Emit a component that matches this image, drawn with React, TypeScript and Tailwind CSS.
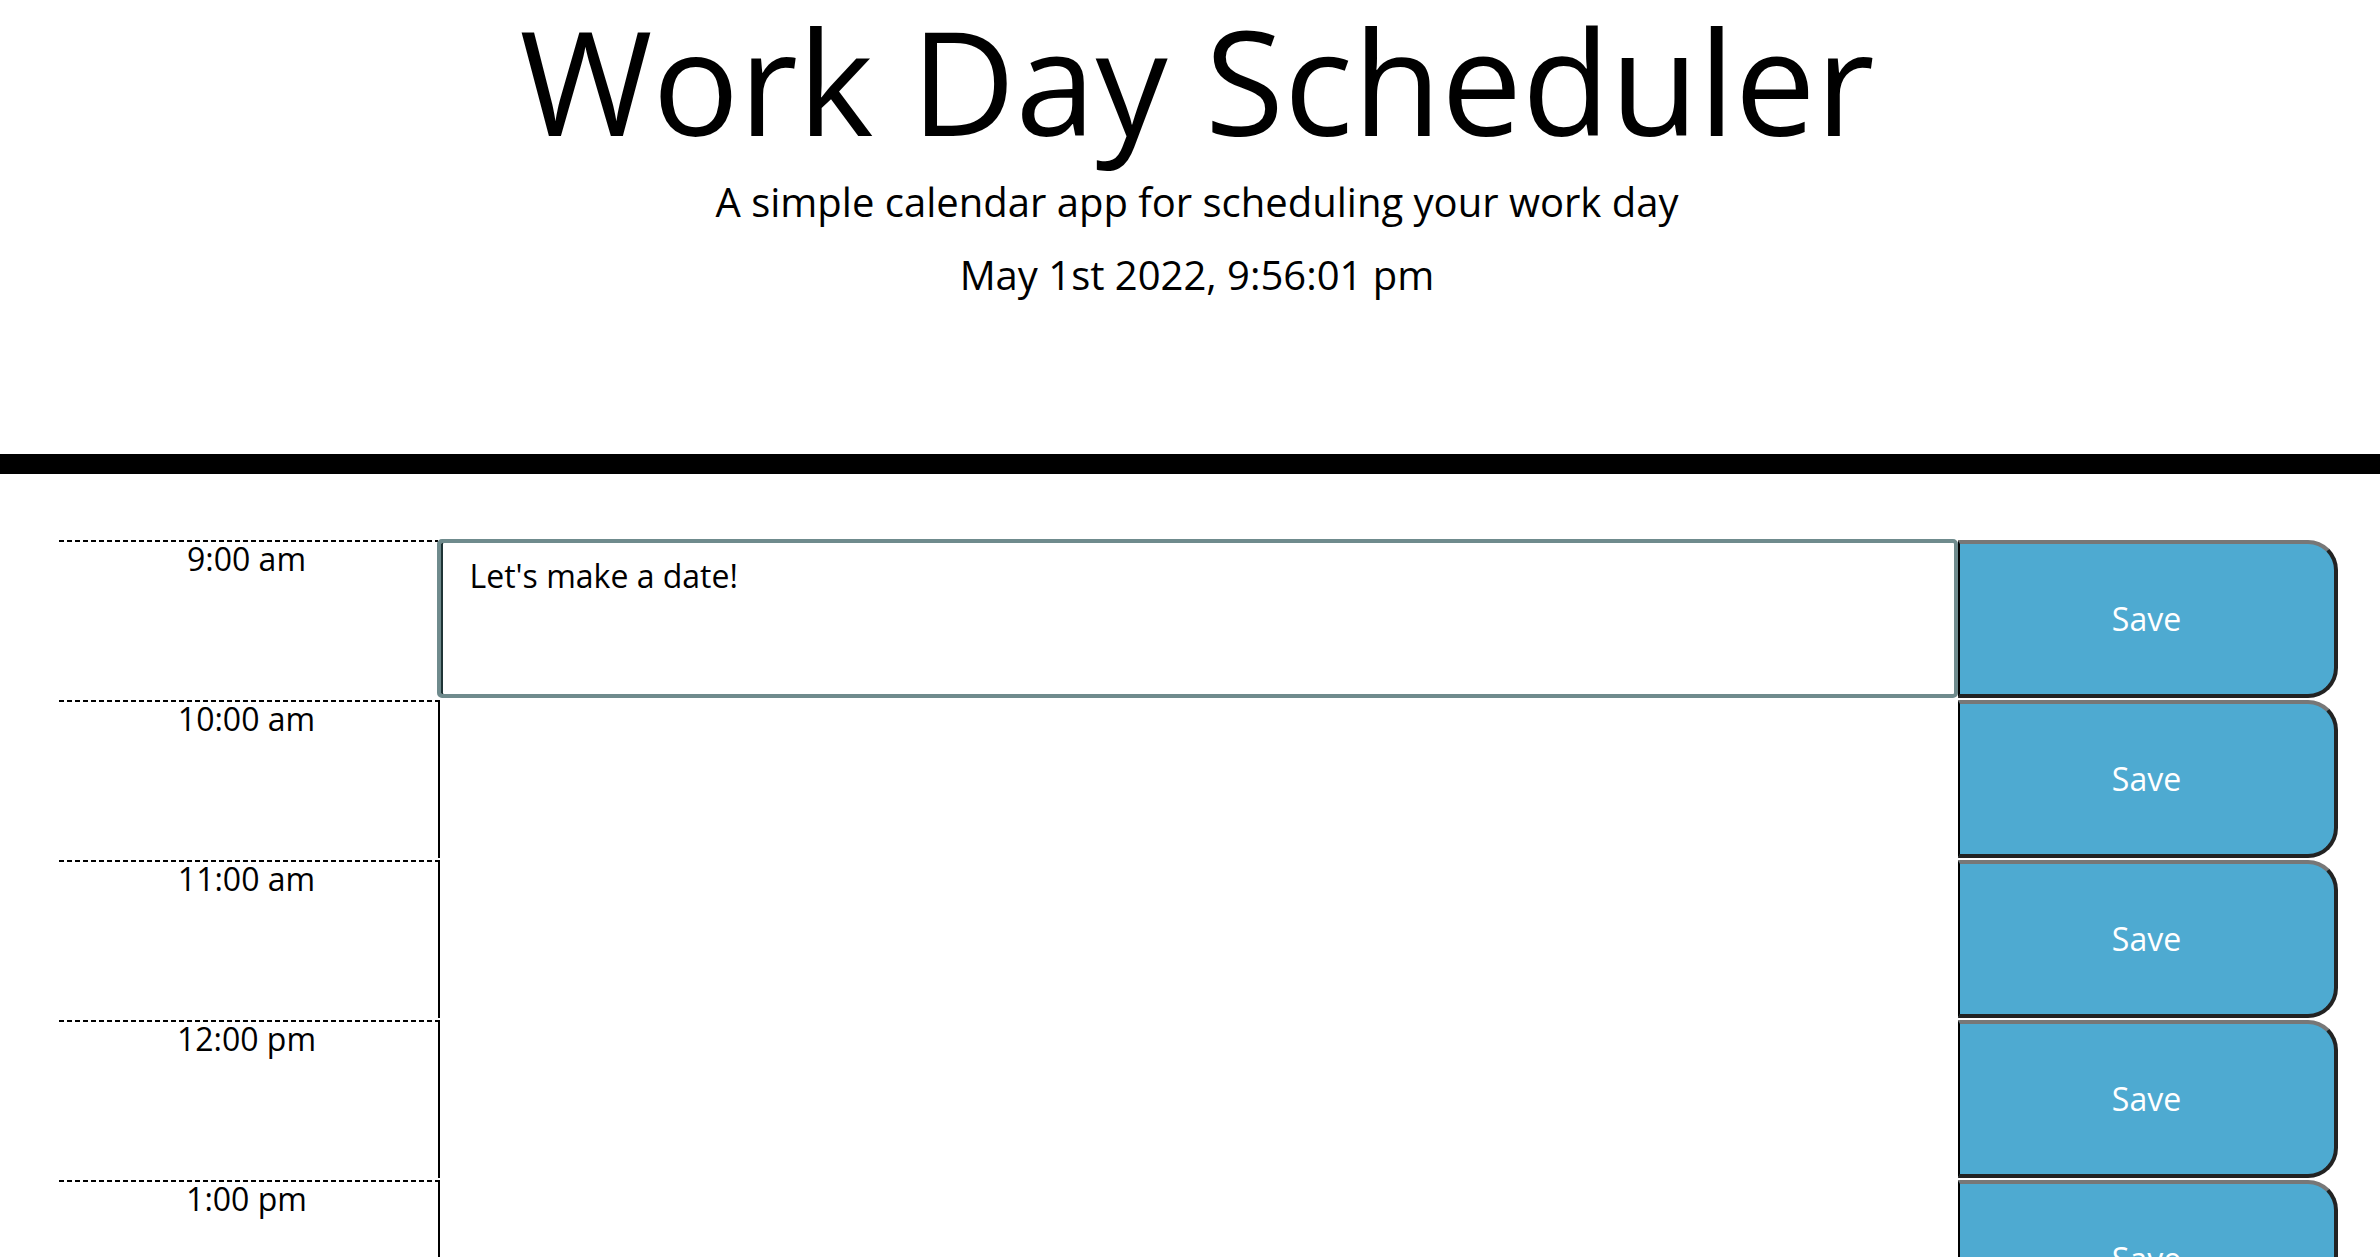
const hours = [
  "9:00 am",
  "10:00 am",
  "11:00 am",
  "12:00 pm",
  "1:00 pm",
  "2:00 pm",
  "3:00 pm",
  "4:00 pm",
  "5:00 pm",
];

function TimeBlock({ hour, text, focused }: { hour: string; text?: string; focused?: boolean }) {
  return (
    <div className="flex h-[160px]">
      {/* dashed top rule drawn as a repeating gradient to match the dash length */}
      <div className="-ml-px w-[382px] bg-[linear-gradient(to_right,#000_5px,transparent_5px)] bg-[length:8px_2px] bg-top bg-repeat-x pt-[2px] text-center text-[32px] leading-[34px]">
        {hour}
      </div>
      {focused ? (
        <textarea
          defaultValue={text}
          className="-ml-px -mt-px h-[159px] w-[1521px] resize-none rounded-[5px] border-4 border-[#6f8b8d] bg-transparent pl-[29px] pt-[9px] text-[32px] leading-[48px] text-black shadow-[inset_2px_0_0_#1e3436] outline-none"
        />
      ) : (
        <textarea
          defaultValue={text}
          className="h-[158px] w-[1520px] resize-none border-l-2 border-black bg-transparent pl-[30px] pt-[12px] text-[32px] leading-[48px] text-black outline-none"
        />
      )}
      <button className="h-[158px] w-[380px] rounded-r-[30px] border-b-4 border-l-2 border-r-4 border-t-4 border-b-[#222] border-l-black border-r-[#222] border-t-[#777] bg-[#4eaad1] text-[32px] text-white">
        Save
      </button>
    </div>
  );
}

export default function App() {
  return (
    <div className="min-h-screen bg-white font-['Open_Sans',sans-serif] text-black">
      <header className="border-b-[20px] border-black pb-[149px]">
        <div className="pl-[14px] text-center">
          <h1 className="pt-[1px] text-[144px] font-normal leading-[158px]">Work Day Scheduler</h1>
          <p className="mt-[13px] text-[40px] leading-[60px]">A simple calendar app for scheduling your work day</p>
          <p className="mt-[13px] text-[40px] leading-[60px]">May 1st 2022, 9:56:01 pm</p>
        </div>
      </header>
      <main className="pl-[14px] pt-[66px]">
        <div className="mx-auto w-[2281px]">
          {hours.map((h, i) => (
            <TimeBlock key={h} hour={h} text={i === 0 ? "Let's make a date!" : ""} focused={i === 0} />
          ))}
        </div>
      </main>
    </div>
  );
}
